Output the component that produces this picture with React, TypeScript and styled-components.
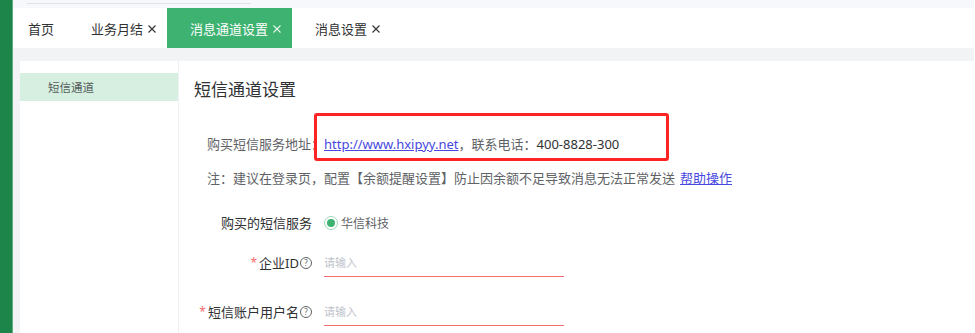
import React from 'react';
import styled, { createGlobalStyle } from 'styled-components';

const GlobalStyle = createGlobalStyle`
  html, body {
    margin: 0;
    padding: 0;
    background: #ffffff;
    font-family: "Noto Sans", "Noto Sans CJK SC", sans-serif;
    color: #303133;
  }
`;

const Shell = styled.div`
  display: flex;
  width: 975px;
  height: 333px;
  overflow: hidden;
`;

const SideStrip = styled.div`
  width: 12px;
  flex-shrink: 0;
  background: #1d8549;
  border-right: 1px solid #5fae80;
`;

const MainColumn = styled.div`
  flex: 1;
  display: flex;
  flex-direction: column;
  min-width: 0;
  margin-right: 1px;
`;

const TopStrip = styled.div`
  height: 8px;
  background: #f7f8fc;
  display: flex;
  flex-direction: column;
`;

const TopLine = styled.div`
  margin: 3px 0 0 14px;
  width: 224px;
  height: 1px;
  background: #e2e4ea;
`;

const TabBar = styled.div`
  height: 40px;
  display: flex;
  align-items: stretch;
  background: #ffffff;
`;

const Tab = styled.div<{ $active?: boolean; $first?: boolean }>`
  display: flex;
  align-items: center;
  gap: 5px;
  padding: ${(p) => (p.$first ? '0 14px 0 15px' : '0 11px 0 23px')};
  font-size: 13px;
  background: ${(p) => (p.$active ? '#3db271' : 'transparent')};
  color: ${(p) => (p.$active ? '#ffffff' : '#303133')};
`;

const CloseIcon = ({ color }: { color: string }) => (
  <svg width="8" height="8" viewBox="0 0 8 8" style={{ marginTop: 1 }}>
    <path d="M0.5 0.5 L7.5 7.5 M7.5 0.5 L0.5 7.5" stroke={color} strokeWidth="1.1" fill="none" />
  </svg>
);

const Body = styled.div`
  flex: 1;
  display: flex;
  background: #f2f3f5;
  padding: 13px 0 0 7px;
`;

const Sidebar = styled.div`
  width: 158px;
  flex-shrink: 0;
  background: #ffffff;
  border-right: 1px solid #eef0f4;
  padding-top: 12px;
`;

const MenuItem = styled.div<{ $active?: boolean }>`
  height: 28px;
  display: flex;
  align-items: center;
  padding-left: 28px;
  font-size: 11.5px;
  color: #555c5a;
  background: ${(p) => (p.$active ? '#d6efe1' : 'transparent')};
`;

const Content = styled.div`
  flex: 1;
  background: #ffffff;
  padding: 0 15px;
`;

const Title = styled.div`
  margin-top: 17px;
  font-size: 17px;
  line-height: 24px;
  color: #303133;
`;

const Info = styled.div`
  padding-left: 13px;
  margin-top: 32px;
`;

const InfoLine = styled.div<{ $top?: number }>`
  position: relative;
  margin-top: ${(p) => p.$top ?? 0}px;
  font-size: 13px;
  line-height: 20px;
  color: #606266;
  white-space: nowrap;
`;

const Link = styled.a`
  color: #4848e0;
  text-decoration: underline;
  cursor: pointer;
`;

const Phone = styled.span`
  color: #303133;
`;

const HelpLink = styled(Link)`
  margin-left: 5px;
`;

const Highlight = styled.div`
  position: absolute;
  left: 107px;
  top: -21px;
  width: 349px;
  height: 42px;
  border: 3px solid #ff2424;
  border-radius: 3px;
  pointer-events: none;
`;

const Form = styled.div`
  margin-top: 25px;
  padding-left: 5px;
  display: flex;
  flex-direction: column;
`;

const FormRow = styled.div<{ $top?: number }>`
  display: flex;
  align-items: center;
  gap: 12px;
  margin-top: ${(p) => p.$top ?? 0}px;
`;

const Label = styled.div`
  width: 113px;
  flex-shrink: 0;
  display: flex;
  align-items: center;
  justify-content: flex-end;
  font-size: 13px;
  line-height: 20px;
  color: #303133;
  white-space: nowrap;
`;

const Required = styled.span`
  color: #f56c6c;
  font-size: 12px;
  margin-right: 2px;
`;

const HelpIcon = styled.span`
  display: inline-flex;
  flex-shrink: 0;
  align-items: center;
  justify-content: center;
  width: 10px;
  height: 10px;
  margin-left: 1px;
  border: 1px solid #606266;
  border-radius: 50%;
  font-size: 8px;
  line-height: 1;
  color: #606266;
`;

const RadioWrap = styled.label`
  display: flex;
  align-items: center;
  gap: 3px;
  font-size: 12px;
  color: #606266;
`;

const RadioOuter = styled.span`
  width: 12px;
  height: 12px;
  border-radius: 50%;
  border: 1px solid #9ed8b6;
  display: flex;
  align-items: center;
  justify-content: center;
  background: #ffffff;
`;

const RadioDot = styled.span`
  width: 8px;
  height: 8px;
  border-radius: 50%;
  background: #3db271;
`;

const InputBox = styled.div`
  width: 240px;
  height: 28px;
  display: flex;
  border-bottom: 1px solid #f56c6c;
`;

const Input = styled.input`
  flex: 1;
  min-width: 0;
  border: none;
  outline: none;
  padding: 0;
  font-family: inherit;
  font-size: 11px;
  color: #303133;
  background: transparent;

  &::placeholder {
    color: #c0c4cc;
  }
`;

const tabs = [
  { name: '首页', closable: false },
  { name: '业务月结', closable: true },
  { name: '消息通道设置', closable: true, active: true },
  { name: '消息设置', closable: true },
];

export default function App() {
  return (
    <>
      <GlobalStyle />
      <Shell>
        <SideStrip />
        <MainColumn>
          <TopStrip>
            <TopLine />
          </TopStrip>
          <TabBar>
            {tabs.map((t, i) => (
              <Tab key={t.name} $active={t.active} $first={i === 0}>
                {t.name}
                {t.closable && <CloseIcon color={t.active ? '#e8f6ee' : '#303133'} />}
              </Tab>
            ))}
          </TabBar>
          <Body>
            <Sidebar>
              <MenuItem $active>短信通道</MenuItem>
            </Sidebar>
            <Content>
              <Title>短信通道设置</Title>
              <Info>
                <InfoLine>
                  购买短信服务地址：<Link>http://www.hxipyy.net</Link>，联系电话：<Phone>400-8828-300</Phone>
                  <Highlight />
                </InfoLine>
                <InfoLine $top={14}>
                  注：建议在登录页，配置【余额提醒设置】防止因余额不足导致消息无法正常发送
                  <HelpLink>帮助操作</HelpLink>
                </InfoLine>
              </Info>
              <Form>
                <FormRow>
                  <Label>购买的短信服务</Label>
                  <RadioWrap>
                    <RadioOuter>
                      <RadioDot />
                    </RadioOuter>
                    华信科技
                  </RadioWrap>
                </FormRow>
                <FormRow $top={15}>
                  <Label>
                    <Required>*</Required>企业ID<HelpIcon>?</HelpIcon>
                  </Label>
                  <InputBox>
                    <Input placeholder="请输入" />
                  </InputBox>
                </FormRow>
                <FormRow $top={20}>
                  <Label>
                    <Required>*</Required>短信账户用户名<HelpIcon>?</HelpIcon>
                  </Label>
                  <InputBox>
                    <Input placeholder="请输入" />
                  </InputBox>
                </FormRow>
              </Form>
            </Content>
          </Body>
        </MainColumn>
      </Shell>
    </>
  );
}
